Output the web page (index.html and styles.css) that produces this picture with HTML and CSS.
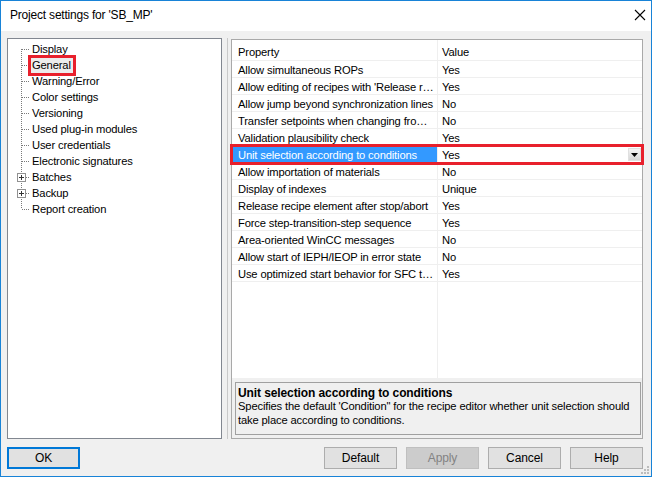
FILE: index.html
```html
<!DOCTYPE html>
<html>
<head>
<meta charset="utf-8">
<link rel="stylesheet" href="styles.css">
</head>
<body>
<div class="window">
  <div class="titlebar">
    <span class="title">Project settings for 'SB_MP'</span>
    <svg class="close" width="12" height="12" viewBox="0 0 12 12"><path d="M1 1 L11 11 M11 1 L1 11" stroke="#000" stroke-width="1.1" fill="none"/></svg>
  </div>
  <div class="body">
    <div class="main">
      <div class="tree">
        <div class="node"><svg class="gut" width="13" height="16"><path d="M4.5 8 V16 M5 8.5 H13" class="dot"/></svg><span class="lbl">Display</span></div>
        <div class="node"><svg class="gut" width="13" height="16"><path d="M4.5 0 V16 M5 8.5 H13" class="dot"/></svg><span class="lbl sel">General</span></div>
        <div class="node"><svg class="gut" width="13" height="16"><path d="M4.5 0 V16 M5 8.5 H13" class="dot"/></svg><span class="lbl">Warning/Error</span></div>
        <div class="node"><svg class="gut" width="13" height="16"><path d="M4.5 0 V16 M5 8.5 H13" class="dot"/></svg><span class="lbl">Color settings</span></div>
        <div class="node"><svg class="gut" width="13" height="16"><path d="M4.5 0 V16 M5 8.5 H13" class="dot"/></svg><span class="lbl">Versioning</span></div>
        <div class="node"><svg class="gut" width="13" height="16"><path d="M4.5 0 V16 M5 8.5 H13" class="dot"/></svg><span class="lbl">Used plug-in modules</span></div>
        <div class="node"><svg class="gut" width="13" height="16"><path d="M4.5 0 V16 M5 8.5 H13" class="dot"/></svg><span class="lbl">User credentials</span></div>
        <div class="node"><svg class="gut" width="13" height="16"><path d="M4.5 0 V16 M5 8.5 H13" class="dot"/></svg><span class="lbl">Electronic signatures</span></div>
        <div class="node"><svg class="gut" width="13" height="16"><path d="M4.5 0 V16 M9 8.5 H13" class="dot"/><rect x="0.5" y="4.5" width="8" height="8" fill="#fff" stroke="#919191"/><path d="M2 8.5 H7 M4.5 6 V11" stroke="#333" fill="none"/></svg><span class="lbl">Batches</span></div>
        <div class="node"><svg class="gut" width="13" height="16"><path d="M4.5 0 V16 M9 8.5 H13" class="dot"/><rect x="0.5" y="4.5" width="8" height="8" fill="#fff" stroke="#919191"/><path d="M2 8.5 H7 M4.5 6 V11" stroke="#333" fill="none"/></svg><span class="lbl">Backup</span></div>
        <div class="node"><svg class="gut" width="13" height="16"><path d="M4.5 0 V8 M5 8.5 H13" class="dot"/></svg><span class="lbl">Report creation</span></div>
      </div>
      <div class="splitter"><div class="split-line"></div></div>
      <div class="rightbox">
        <div class="grid">
          <div class="row head"><div class="c1">Property</div><div class="c2">Value</div></div>
          <div class="row"><div class="c1">Allow simultaneous ROPs</div><div class="c2">Yes</div></div>
          <div class="row"><div class="c1">Allow editing of recipes with 'Release r…</div><div class="c2">Yes</div></div>
          <div class="row"><div class="c1">Allow jump beyond synchronization lines</div><div class="c2">No</div></div>
          <div class="row"><div class="c1">Transfer setpoints when changing fro…</div><div class="c2">No</div></div>
          <div class="row"><div class="c1">Validation plausibility check</div><div class="c2">Yes</div></div>
          <div class="row selrow"><div class="c1">Unit selection according to conditions</div><div class="c2">Yes<span class="drop"><svg width="7" height="4" viewBox="0 0 7 4"><path d="M0 0 H7 L3.5 4 Z" fill="#000"/></svg></span></div></div>
          <div class="row"><div class="c1">Allow importation of materials</div><div class="c2">No</div></div>
          <div class="row"><div class="c1">Display of indexes</div><div class="c2">Unique</div></div>
          <div class="row"><div class="c1">Release recipe element after stop/abort</div><div class="c2">Yes</div></div>
          <div class="row"><div class="c1">Force step-transition-step sequence</div><div class="c2">Yes</div></div>
          <div class="row"><div class="c1">Area-oriented WinCC messages</div><div class="c2">No</div></div>
          <div class="row"><div class="c1">Allow start of IEPH/IEOP in error state</div><div class="c2">No</div></div>
          <div class="row"><div class="c1">Use optimized start behavior for SFC t…</div><div class="c2">Yes</div></div>
          <div class="row filler"><div class="c1"></div><div class="c2"></div></div>
        </div>
        <div class="desc">
          <div class="desc-title">Unit selection according to conditions</div>
          <div class="desc-text">Specifies the default 'Condition" for the recipe editor whether unit selection should take place according to conditions.</div>
        </div>
      </div>
    </div>
    <div class="footer">
      <button class="btn default-btn">OK</button>
      <div class="btn-group">
        <button class="btn">Default</button>
        <button class="btn disabled">Apply</button>
        <button class="btn">Cancel</button>
        <button class="btn">Help</button>
      </div>
    </div>
  </div>
  <svg class="grip" width="9" height="9" viewBox="0 0 9 9">
    <rect x="6" y="0" width="2" height="2" fill="#bcbcbc"/>
    <rect x="3" y="3" width="2" height="2" fill="#bcbcbc"/>
    <rect x="6" y="3" width="2" height="2" fill="#bcbcbc"/>
    <rect x="0" y="6" width="2" height="2" fill="#bcbcbc"/>
    <rect x="3" y="6" width="2" height="2" fill="#bcbcbc"/>
    <rect x="6" y="6" width="2" height="2" fill="#bcbcbc"/>
  </svg>
</div>
</body>
</html>
```
FILE: styles.css
```css
* { box-sizing: border-box; }
html, body { margin: 0; padding: 0; }
body {
  font-family: "Liberation Sans", Arial, sans-serif;
  font-size: 11.2px;
  letter-spacing: -0.15px;
  color: #000;
  background: #fff;
}
.window {
  position: relative;
  width: 652px;
  height: 477px;
  border: 1px solid #1883d7;
  background: #f0f0f0;
  display: flex;
  flex-direction: column;
}
.titlebar {
  height: 30px;
  background: #fff;
  display: flex;
  align-items: center;
  padding: 0 0 2px 9px;
}
.title { font-size: 12px; letter-spacing: -0.2px; }
.close { margin-left: auto; margin-right: 5px; }
.body {
  flex: 1;
  padding: 7px 8px 0 6px;
  display: flex;
  flex-direction: column;
}
.main {
  display: flex;
  height: 401px;
}
.tree {
  width: 215px;
  border: 1px solid #828790;
  background: #fff;
  padding: 2px 0 0 9px;
}
.node {
  height: 16px;
  display: flex;
  align-items: center;
}
.gut { flex: none; display: block; }
.dot { stroke: #7a7a7a; stroke-dasharray: 1 1; fill: none; }
.lbl {
  margin-left: 1px;
  padding: 0 2px 0 1px;
  line-height: 15px;
  white-space: nowrap;
}
.lbl.sel {
  background: #ececec;
  outline: 3px solid #e8202c;
}
.splitter {
  width: 9px;
  display: flex;
  justify-content: center;
}
.split-line {
  width: 1px;
  background: #c9c9c9;
  margin-left: 1px;
}
.rightbox {
  width: 412px;
  height: 400px;
  margin-top: 1px;
  border: 1px solid #a9a9a9;
  display: flex;
  flex-direction: column;
}
.grid {
  height: 338px;
  background: #fff;
  display: flex;
  flex-direction: column;
}
.row {
  display: flex;
  height: 17px;
  border-bottom: 1px solid #efefef;
  flex: none;
}
.row.head { height: 21px; }
.row.head .c1, .row.head .c2 { padding-top: 3px; }
.row.filler { flex: 1; border-bottom: none; }
.c1 {
  width: 206px;
  flex: none;
  border-right: 1px solid #efefef;
  padding-left: 6px;
  padding-top: 1px;
  white-space: nowrap;
  overflow: hidden;
  display: flex;
  align-items: center;
}
.c2 {
  flex: 1;
  padding-left: 4px;
  padding-top: 1px;
  display: flex;
  align-items: center;
}
.selrow { outline: 3px solid #e8202c; outline-offset: -1px; position: relative; }
.selrow .c1 { background: #3399ff; color: #fff; }
.drop {
  margin-left: auto;
  margin-right: 1px;
  width: 13px;
  height: 13px;
  background: linear-gradient(#f4f4f4, #d6d6d6);
  border: 1px solid #e0e0e0;
  display: flex;
  align-items: center;
  justify-content: center;
}
.drop svg { display: block; }
.desc {
  margin: 4px 1px 3px 3px;
  height: 53px;
  border: 1px solid #a0a0a0;
  padding: 3px 2px 0 2px;
  background: #f0f0f0;
}
.desc-title { font-weight: bold; font-size: 12px; letter-spacing: -0.1px; line-height: 14px; }
.desc-text { line-height: 13.5px; }
.footer {
  margin-top: 8px;
  display: flex;
}
.btn-group { margin-left: auto; display: flex; gap: 9px; }
.btn {
  width: 73px;
  height: 22px;
  font-family: inherit;
  font-size: 12px;
  letter-spacing: -0.1px;
  color: #000;
  background: #e1e1e1;
  border: 1px solid #adadad;
  padding: 0;
}
.btn.default-btn { border: 2px solid #0078d7; }
.btn.disabled { background: #cccccc; border-color: #bfbfbf; color: #838383; }
.grip { position: absolute; right: 1px; bottom: 1px; }
```
